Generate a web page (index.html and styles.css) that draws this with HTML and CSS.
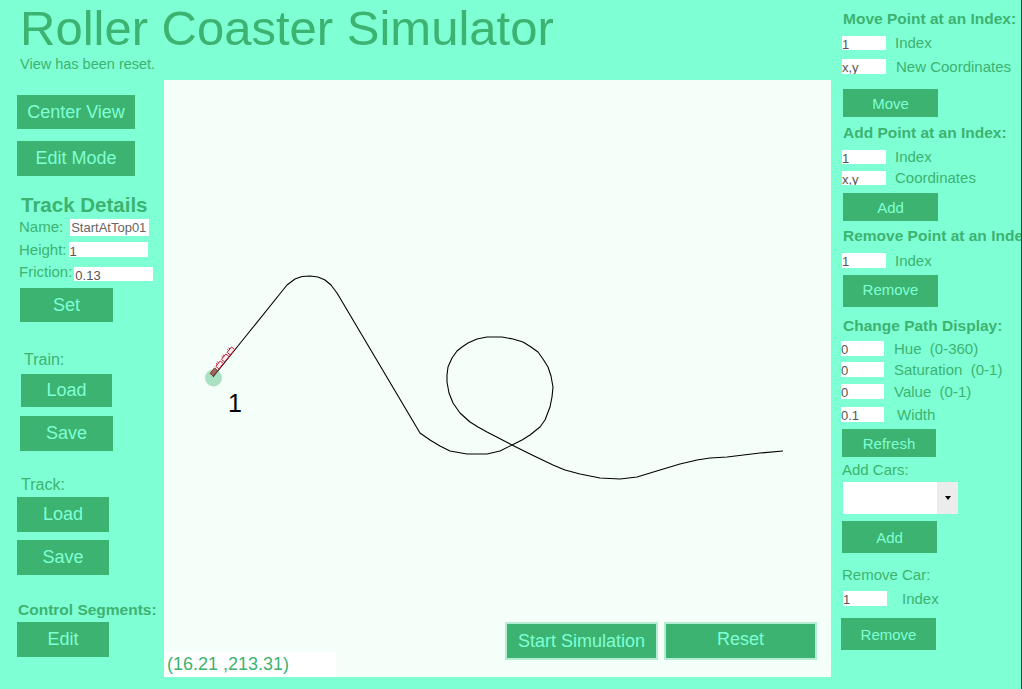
FILE: index.html
```html
<!DOCTYPE html>
<html lang="en">
<head>
<meta charset="utf-8">
<title>Roller Coaster Simulator</title>
<link rel="stylesheet" href="styles.css">
</head>
<body>
<div class="app">
  <div class="main">
    <header class="header">
      <h1 class="title">Roller Coaster Simulator</h1>
      <p class="status">View has been reset.</p>
    </header>
    <div class="work">
      <aside class="left">
        <button class="btn btn-lg b-center">Center View</button>
        <button class="btn btn-lg b-edit">Edit Mode</button>
        <h2 class="details-title">Track Details</h2>
        <div class="field f-name"><span class="flabel">Name:</span><input class="tin tin-name" value="StartAtTop01"></div>
        <div class="field f-height"><span class="flabel">Height:</span><input class="tin tin-height" value="1"></div>
        <div class="field f-friction"><span class="flabel">Friction:</span><input class="tin tin-friction" value="0.13"></div>
        <button class="btn btn-lg b-set">Set</button>
        <div class="group-label gl-train">Train:</div>
        <button class="btn btn-lg b-tload">Load</button>
        <button class="btn btn-lg b-tsave">Save</button>
        <div class="group-label gl-track">Track:</div>
        <button class="btn btn-lg b-kload">Load</button>
        <button class="btn btn-lg b-ksave">Save</button>
        <div class="seg-label">Control Segments:</div>
        <button class="btn btn-lg b-seg">Edit</button>
      </aside>
      <div class="stage">
        <svg class="canvas" width="667" height="597" viewBox="164 80 667 597" xmlns="http://www.w3.org/2000/svg">
          <polyline fill="none" stroke="#000" stroke-width="1.1" stroke-linejoin="round"
            points="213,377 250,331 287,285 295,279 302,276.5 310,276 318,277 325,280 331,285 337,293 420,433 430,440 440,446 450,451 467,454 487,454 500,451 512,445 522,440 530,435 540,427 545,420 550,407 552,397 553,387 551,376 548,367 543,359 538,352 531,347 523,342 513,339 502,337 487,337 477,339 468,343 462,347 457,351 452,358 448,367 447,375 447,382 449,393 453,403 460,413 470,422 478,427 487,432 512,445 530,454 553,465 565,470 580,474 600,478 620,479 637,477 660,470 680,464 697,460 710,458 727,457 760,453 783,451"/>
          <circle cx="213.5" cy="378" r="8.5" fill="#3cb371" fill-opacity="0.4"/>
          <g transform="translate(213 377) rotate(-51)">
            <rect x="1" y="-4.5" width="7" height="4" fill="#9c6b5e" stroke="#8b2a2a" stroke-width="0.9"/>
            <rect x="10" y="-4.5" width="7" height="4" fill="#fff2f2" stroke="#c8102e" stroke-width="0.9"/>
            <rect x="19" y="-4.5" width="7" height="4" fill="#fff2f2" stroke="#c8102e" stroke-width="0.9"/>
            <rect x="28" y="-4.5" width="7" height="4" fill="#fff2f2" stroke="#c8102e" stroke-width="0.9"/>
            <path d="M12.5,-4.5 v-1.8 M14.5,-4.5 v-1.8 M21.5,-4.5 v-1.8 M23.5,-4.5 v-1.8 M30.5,-4.5 v-1.8 M32.5,-4.5 v-1.8" stroke="#c8102e" stroke-width="0.9"/>
          </g>
          <text x="228" y="412" class="pt-label">1</text>
        </svg>
        <div class="coords">(16.21 ,213.31)</div>
        <div class="sim-controls">
          <button class="btn btn-sim">Start Simulation</button>
          <button class="btn btn-sim btn-reset">Reset</button>
        </div>
      </div>
    </div>
  </div>
  <aside class="right">
    <h3 class="rh rh-move">Move Point at an Index:</h3>
    <div class="rrow rr-m1"><input class="rin" value="1"><span class="rlabel gap9">Index</span></div>
    <div class="rrow rr-m2"><input class="rin rin-tall" value="x,y"><span class="rlabel gap10">New Coordinates</span></div>
    <button class="btn btn-r rb-move">Move</button>
    <h3 class="rh rh-add">Add Point at an Index:</h3>
    <div class="rrow rr-a1"><input class="rin" value="1"><span class="rlabel gap9">Index</span></div>
    <div class="rrow rr-a2"><input class="rin" value="x,y"><span class="rlabel gap9">Coordinates</span></div>
    <button class="btn btn-r rb-add">Add</button>
    <h3 class="rh rh-remove">Remove Point at an Index:</h3>
    <div class="rrow rr-r1"><input class="rin rin-tall" value="1"><span class="rlabel gap9">Index</span></div>
    <button class="btn btn-r rb-remove">Remove</button>
    <h3 class="rh rh-path">Change Path Display:</h3>
    <div class="rrow rr-hue"><input class="rin rin-path" value="0"><span class="rlabel gap10">Hue&nbsp; (0-360)</span></div>
    <div class="rrow rr-sat"><input class="rin rin-path" value="0"><span class="rlabel gap10">Saturation&nbsp; (0-1)</span></div>
    <div class="rrow rr-val"><input class="rin rin-path" value="0"><span class="rlabel gap10">Value&nbsp; (0-1)</span></div>
    <div class="rrow rr-wid"><input class="rin rin-path" value="0.1"><span class="rlabel gap13">Width</span></div>
    <button class="btn btn-r rb-refresh">Refresh</button>
    <div class="rtext rt-cars">Add Cars:</div>
    <div class="select" role="combobox"><span class="select-btn"><span class="caret"></span></span></div>
    <button class="btn btn-r rb-addcar">Add</button>
    <div class="rtext rt-remcar">Remove Car:</div>
    <div class="rrow rr-car"><input class="rin rin-car" value="1"><span class="rlabel gap15">Index</span></div>
    <button class="btn btn-r rb-remcar">Remove</button>
  </aside>
</div>
</body>
</html>
```

FILE: styles.css
```css
* { box-sizing: border-box; }

html, body {
  margin: 0;
  padding: 0;
  background: #7fffd4;
  overflow: hidden;
}

body {
  font-family: "Liberation Sans", Arial, sans-serif;
  color: #3cb371;
  width: 1022px;
  height: 689px;
}

.app {
  display: flex;
  width: 1022px;
  height: 689px;
}

.main {
  width: 831px;
  flex: none;
  display: flex;
  flex-direction: column;
}

.header {
  height: 80px;
  padding-left: 20px;
}

.title {
  margin: 4px 0 0;
  font-size: 49px;
  line-height: 48px;
  font-weight: normal;
  color: #3cb371;
  white-space: nowrap;
}

.status {
  margin: 3px 0 0;
  font-size: 14.5px;
  line-height: 18px;
}

.work {
  display: flex;
  height: 597px;
}

/* ---------- buttons ---------- */
.btn {
  display: block;
  background: #3cb371;
  color: #7fffd4;
  border: none;
  padding: 0;
  font-family: "Liberation Sans", Arial, sans-serif;
  cursor: pointer;
}

.btn-lg { font-size: 18px; }

/* ---------- left column ---------- */
.left {
  width: 164px;
  flex: none;
  display: flex;
  flex-direction: column;
  align-items: flex-start;
}

.b-center { margin: 15px 0 0 17px; width: 118px; height: 34px; }
.b-edit   { margin: 12px 0 0 17px; width: 118px; height: 35px; }

.details-title {
  margin: 17px 0 0 21px;
  font-size: 20.5px;
  line-height: 24px;
  font-weight: bold;
  white-space: nowrap;
}

.field {
  display: flex;
  align-items: center;
  margin-left: 19px;
  font-size: 15px;
}

.flabel { line-height: 18px; white-space: nowrap; }

.tin {
  border: none;
  background: #fff;
  padding: 0 1px;
  font-family: "Liberation Sans", Arial, sans-serif;
  font-size: 13px;
  color: #555;
  outline: none;
}

.f-name { margin-top: 1px; height: 18px; }
.tin-name { width: 79px; height: 17px; margin-left: 7px; color: #666; }

.f-height { margin-top: 5px; height: 17px; }
.tin-height { width: 79px; height: 15px; margin-left: 2px; padding-top: 3px; }

.f-friction { margin-top: 6px; height: 17px; align-items: flex-end; }
.tin-friction { width: 79px; height: 14px; margin-left: 2px; padding-top: 3px; }

.b-set { margin: 7px 0 0 20px; width: 93px; height: 34px; }

.group-label {
  font-size: 16px;
  line-height: 18px;
}
.gl-train { margin: 29px 0 0 24px; }
.b-tload  { margin: 5px 0 0 21px; width: 91px; height: 33px; }
.b-tsave  { margin: 9px 0 0 20px; width: 93px; height: 35px; }

.gl-track { margin: 25px 0 0 21px; }
.b-kload  { margin: 3px 0 0 17px; width: 92px; height: 35px; }
.b-ksave  { margin: 8px 0 0 17px; width: 92px; height: 35px; }

.seg-label {
  margin: 26px 0 0 18px;
  font-size: 15.5px;
  line-height: 18px;
  font-weight: bold;
  white-space: nowrap;
}
.b-seg { margin: 3px 0 0 17px; width: 92px; height: 35px; }

/* ---------- canvas ---------- */
.stage {
  position: relative;
  width: 667px;
  height: 597px;
  background: #f5fffa;
}

.canvas { display: block; }

.pt-label {
  font-family: "Liberation Sans", Arial, sans-serif;
  font-size: 25px;
  fill: #000;
}

.coords {
  position: absolute;
  left: 0;
  bottom: 0;
  width: 172px;
  height: 25px;
  background: #fff;
  padding-left: 3px;
  font-size: 18px;
  line-height: 25px;
  color: #3cb371;
}

.sim-controls {
  position: absolute;
  right: 14px;
  bottom: 17px;
  display: flex;
  gap: 6px;
}

.btn-sim {
  width: 153px;
  height: 38px;
  font-size: 18px;
  border: 2px solid #b4edd2;
}

.btn-reset { padding-bottom: 4px; }

/* ---------- right panel ---------- */
.right {
  width: 191px;
  flex: none;
  padding-left: 10px;
  overflow: hidden;
  border-right: 1px solid #24463b;
  display: flex;
  flex-direction: column;
  align-items: flex-start;
}

.rh {
  margin: 0 0 0 2px;
  font-size: 15.5px;
  line-height: 18px;
  font-weight: bold;
  white-space: nowrap;
}
.rh-move   { margin-top: 10px; }
.rh-add    { margin-top: 7px; }
.rh-remove { margin-top: 6px; }
.rh-path   { margin-top: 10px; }

.rrow {
  display: flex;
  align-items: center;
  height: 14px;
  font-size: 15px;
  white-space: nowrap;
}

.rlabel { line-height: 14px; }
.gap9  { margin-left: 9px; }
.gap10 { margin-left: 10px; }
.gap13 { margin-left: 13px; }
.gap15 { margin-left: 15px; }

.rin {
  border: none;
  background: #fff;
  padding: 2px 0 0 0;
  width: 44px;
  height: 14px;
  margin-left: 1px;
  font-family: "Liberation Sans", Arial, sans-serif;
  font-size: 13px;
  color: #555;
  outline: none;
}
.rin-tall { height: 15px; }
.rin-path { width: 43px; height: 15px; margin-left: 0; }
.rin-car  { height: 15px; margin-left: 2px; }

.rr-m1 { margin-top: 8px; }
.rr-m2 { margin-top: 9px; height: 15px; }
.rr-a1 { margin-top: 8px; }
.rr-a2 { margin-top: 7px; }
.rr-r1 { margin-top: 8px; height: 15px; }
.rr-hue { margin-top: 6px; height: 15px; }
.rr-sat { margin-top: 6px; height: 15px; }
.rr-val { margin-top: 7px; height: 15px; }
.rr-wid { margin-top: 8px; height: 15px; }
.rr-car { margin-top: 7px; height: 15px; }

.btn-r { font-size: 15px; width: 95px; }
.rb-move    { margin: 15px 0 0 2px; height: 28px; }
.rb-add     { margin: 8px 0 0 2px; height: 28px; }
.rb-remove  { margin: 7px 0 0 2px; height: 32px; padding-bottom: 3px; }
.rb-refresh { margin: 7px 0 0 1px; height: 28px; width: 94px; }
.rb-addcar  { margin: 7px 0 0 1px; height: 32px; }
.rb-remcar  { margin: 12px 0 0 0; height: 32px; }

.rtext {
  font-size: 15px;
  line-height: 18px;
  margin-left: 1px;
  white-space: nowrap;
}
.rt-cars   { margin-top: 4px; }
.rt-remcar { margin-top: 13px; }

.select {
  margin: 3px 0 0 2px;
  width: 115px;
  height: 32px;
  background: #fff;
  display: flex;
  justify-content: flex-end;
}

.select-btn {
  width: 21px;
  height: 32px;
  background: #ececec;
  display: flex;
  align-items: center;
  justify-content: center;
}

.caret {
  width: 0;
  height: 0;
  border-left: 3px solid transparent;
  border-right: 3px solid transparent;
  border-top: 4px solid #000;
}
```
